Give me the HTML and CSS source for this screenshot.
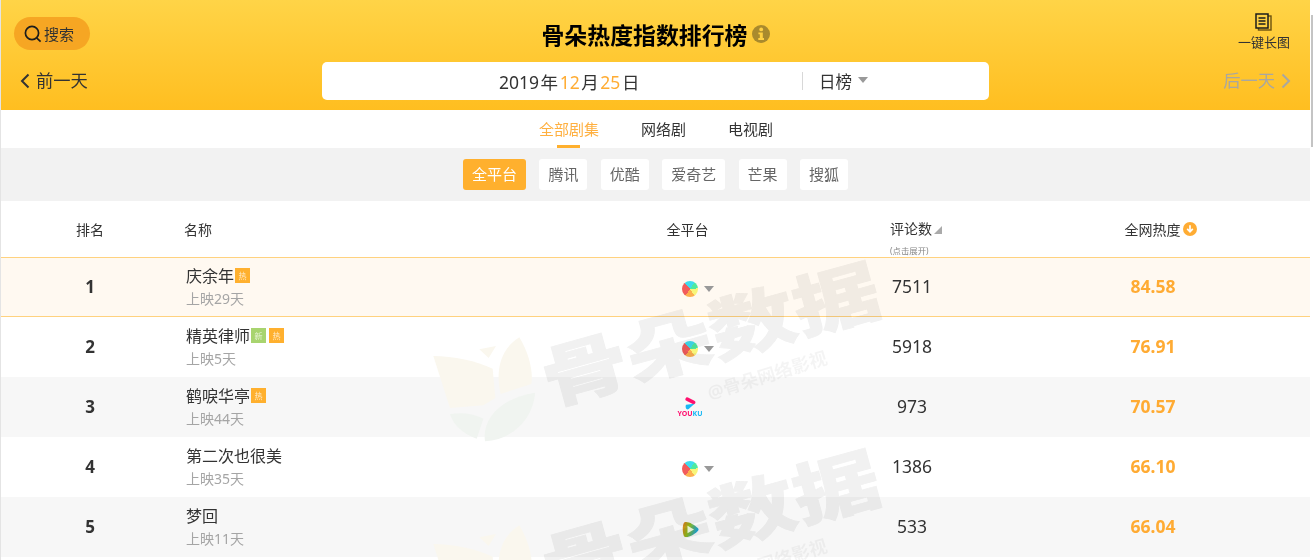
FILE: index.html
```html
<!DOCTYPE html>
<html lang="zh-CN">
<head>
<meta charset="utf-8">
<title>骨朵热度指数排行榜</title>
<link rel="stylesheet" href="styles.css">
</head>
<body>
<div class="app">
  <header class="hero">
    <div class="hero-left">
      <button class="search">
        <svg class="search-ico" viewBox="0 0 18 18"><circle cx="8" cy="8" r="6.600" fill="none" stroke="#1c1c1c" stroke-width="1.700"/><path d="M12.600 12.800l4 3.800" stroke="#1c1c1c" stroke-width="1.700" fill="none"/></svg>
        <span>搜索</span>
      </button>
      <a class="day-link prev"><svg class="chev" viewBox="0 0 10 16"><path d="M8.500 1.500L2 8l6.500 6.500" fill="none" stroke="#333" stroke-width="2"/></svg>前一天</a>
    </div>
    <div class="hero-center">
      <h1 class="title">骨朵热度指数排行榜<svg class="info" viewBox="0 0 18 18"><circle cx="9" cy="9" r="9" fill="#a98a2d"/><circle cx="9.200" cy="4.400" r="1.900" fill="#ffd042"/><path d="M6.400 7.400h4.400v5.600h1.200v1.900H6.300V13h1.500V9.200H6.400z" fill="#ffd042"/></svg></h1>
      <div class="date-box">
        <div class="date"><span>2019</span> 年 <em>12</em> 月 <em>25</em> 日</div>
        <div class="range"><span>日榜</span><i class="tri tri-range"></i></div>
      </div>
    </div>
    <div class="hero-right">
      <div class="longpic">
        <svg class="doc" viewBox="0 0 17 18"><rect x="3.500" y="3" width="12.500" height="14" fill="none" stroke="#6b5210" stroke-width="1.400"/><rect x="1" y="1" width="12" height="14" fill="#ffd042" stroke="#1c1c1c" stroke-width="1.500"/><path d="M3.500 5h7M3.500 8h7M3.500 11h7" stroke="#1c1c1c" stroke-width="1.300"/></svg>
        <span>一键长图</span>
      </div>
      <a class="day-link next">后一天<svg class="chev" viewBox="0 0 10 16"><path d="M1.500 1.500L8 8l-6.500 6.500" fill="none" stroke="#a9a7a0" stroke-width="2"/></svg></a>
    </div>
  </header>

  <nav class="tabs">
    <a class="tab active">全部剧集</a>
    <a class="tab">网络剧</a>
    <a class="tab">电视剧</a>
  </nav>

  <div class="filters">
    <a class="chip on">全平台</a>
    <a class="chip">腾讯</a>
    <a class="chip">优酷</a>
    <a class="chip">爱奇艺</a>
    <a class="chip">芒果</a>
    <a class="chip">搜狐</a>
  </div>

  <div class="table">
    <div class="row head">
      <div class="c-rank">排名</div>
      <div class="c-name head-name">名称</div>
      <div class="c-plat head-plat">全平台</div>
      <div class="c-comm head-comm"><span class="sortable">评论数<i class="corner"></i></span><small class="hint">(点击展开)</small></div>
      <div class="c-heat head-heat">全网热度<svg class="down" viewBox="0 0 14 14"><circle cx="7" cy="7" r="7" fill="#ffac33"/><path d="M7 3.200v6.200M4.200 6.800L7 9.800l2.800-3" fill="none" stroke="#fff" stroke-width="1.700"/></svg></div>
    </div>

    <div class="row first">
      <div class="c-rank rank">1</div>
      <div class="c-name"><div class="name">庆余年<b class="badge hot">热</b></div><div class="days">上映29天</div></div>
      <div class="c-plat"><i class="pie"></i><i class="tri"></i></div>
      <div class="c-comm num">7511</div>
      <div class="c-heat heat">84.58</div>
    </div>
    <div class="row">
      <div class="c-rank rank">2</div>
      <div class="c-name"><div class="name">精英律师<b class="badge new">新</b><b class="badge hot">热</b></div><div class="days">上映5天</div></div>
      <div class="c-plat"><i class="pie"></i><i class="tri"></i></div>
      <div class="c-comm num">5918</div>
      <div class="c-heat heat">76.91</div>
    </div>
    <div class="row alt">
      <div class="c-rank rank">3</div>
      <div class="c-name"><div class="name">鹤唳华亭<b class="badge hot">热</b></div><div class="days">上映44天</div></div>
      <div class="c-plat">
        <div class="youku">
          <svg class="youku-mark" viewBox="0 0 11 13"><path d="M2.200 2.200L8.600 5.400" fill="none" stroke="#ff0f6e" stroke-width="3.600" stroke-linecap="round"/><path d="M1 7.800L9.500 6.800 3.400 12.300C1 13 0 10 1 7.800z" fill="#18b8f5"/></svg>
          <span class="youku-text">YOU<span class="ku">KU</span></span>
        </div>
      </div>
      <div class="c-comm num">973</div>
      <div class="c-heat heat">70.57</div>
    </div>
    <div class="row">
      <div class="c-rank rank">4</div>
      <div class="c-name"><div class="name">第二次也很美</div><div class="days">上映35天</div></div>
      <div class="c-plat"><i class="pie"></i><i class="tri"></i></div>
      <div class="c-comm num">1386</div>
      <div class="c-heat heat">66.10</div>
    </div>
    <div class="row alt">
      <div class="c-rank rank">5</div>
      <div class="c-name"><div class="name">梦回</div><div class="days">上映11天</div></div>
      <div class="c-plat">
        <svg class="tencent" viewBox="0 0 17 17">
          <defs><linearGradient id="tg" x1="0" y1="0" x2="1" y2="0.300"><stop offset="0" stop-color="#e8791a"/><stop offset=".45" stop-color="#8fb81a"/><stop offset="1" stop-color="#1aa5d8"/></linearGradient></defs>
          <path d="M2.500 1.200C6 0 12 3.500 15.800 7c1 1 1 2 0 3-3.500 3.500-9.500 7-13.300 5.800C.5 14-.2 3.500 2.500 1.200z" fill="url(#tg)"/>
          <path d="M5.500 4.800l6.500 3.700-6.500 3.700z" fill="#f2fbdc"/>
        </svg>
      </div>
      <div class="c-comm num">533</div>
      <div class="c-heat heat">66.04</div>
    </div>
  </div>

  <div class="wm wm-a" aria-hidden="true">
    <svg class="wm-logo" viewBox="30 250 330 330">
      <path class="leaf-cream" d="M40 316c60 0 130 15 178 38l8 88-36 22-100 8z"/>
      <path class="leaf-cream" d="M298 260c30 50 42 105 36 140l-92 30c-14-60-8-130 56-170z"/>
      <path class="leaf-cream" d="M178 296l50-10-22 36z"/>
      <path class="leaf-green" d="M345 426c-4 70-60 140-150 146-10-70 50-130 150-146z"/>
      <path class="leaf-green" d="M90 490c40-6 75 0 100 14l-20 60c-40-14-70-40-80-74z"/>
    </svg>
    <div class="wm-text">骨朵数据</div>
    <div class="wm-sub">@骨朵网络影视</div>
  </div>
  <div class="wm wm-b" aria-hidden="true">
    <svg class="wm-logo" viewBox="30 250 330 330">
      <path class="leaf-cream" d="M40 316c60 0 130 15 178 38l8 88-36 22-100 8z"/>
      <path class="leaf-cream" d="M298 260c30 50 42 105 36 140l-92 30c-14-60-8-130 56-170z"/>
      <path class="leaf-cream" d="M178 296l50-10-22 36z"/>
    </svg>
    <div class="wm-text">骨朵数据</div>
    <div class="wm-sub">@骨朵网络影视</div>
  </div>

  <div class="scroll-thumb"></div>
</div>
</body>
</html>
```
FILE: styles.css
```css
* { box-sizing: border-box; }
html, body { margin: 0; padding: 0; height: 100%; overflow: hidden; background: #fff; }
body { font-family: "Noto Sans", "Noto Sans CJK SC", sans-serif; color: #333; }
.app { position: relative; width: 1310px; height: 560px; border-left: 1px solid #e4e4e4; overflow: hidden; }

.hero { height: 110px; display: grid; grid-template-columns: 321px 667px 321px; background: linear-gradient(180deg, #ffd447 0%, #ffbe20 100%); }
.hero-left, .hero-right { display: flex; flex-direction: column; }
.hero-left { align-items: flex-start; padding: 17px 0 0 13px; }
.search { width: 76px; height: 33px; border: 0; border-radius: 17px; background: #f6a623; display: flex; align-items: center; padding: 0 0 0 10px; gap: 2px; font: 15px "Noto Sans", "Noto Sans CJK SC", sans-serif; color: #333; }
.search-ico { width: 18px; height: 18px; flex: none; }
.day-link { display: flex; align-items: center; font-size: 17.300px; line-height: 24px; gap: 6px; }
.prev { margin: 19px 0 0 6px; }
.chev { width: 10px; height: 16px; flex: none; }
.next { color: #a9a7a0; margin: 7px -1px 0 0; }
.hero-right { align-items: flex-end; padding: 13px 20px 0 0; }
.longpic { display: flex; flex-direction: column; align-items: center; font-size: 13px; line-height: 17px; color: #333; height: 49px; }
.doc { width: 17px; height: 18px; flex: none; margin-bottom: 3px; }
.title { margin: 0; height: 62px; display: flex; justify-content: center; align-items: center; padding: 6px 0 0 0; font-size: 22.900px; font-weight: 700; color: #000; }
.info { width: 18px; height: 18px; margin-left: 4px; }
.date-box { height: 38px; background: #fff; border-radius: 5px; display: flex; align-items: center; }
.date { width: 480px; padding-left: 177px; font-size: 17.500px; color: #333; word-spacing: -3px; white-space: nowrap; }
.date em { font-style: normal; color: #ffac33; }
.range { display: flex; align-items: center; height: 18px; border-left: 1px solid #d8d8d8; padding-left: 16px; font-size: 16.500px; gap: 6px; }
.tri { display: block; width: 0; height: 0; border-style: solid; border-width: 6px 5.500px 0; border-color: #999 transparent transparent; }
.tri-range { border-width: 6px 5px 0; margin-top: -3px; }

.tabs { height: 38px; display: flex; justify-content: center; gap: 42px; padding: 0 0 0 1px; }
.tab { position: relative; font-size: 15px; line-height: 38px; color: #333; }
.tab.active { color: #ffb040; }
.tab.active::after { content: ""; position: absolute; left: 18px; bottom: 0; width: 23px; height: 3px; background: #ffb02e; }

.filters { height: 53px; background: #f2f2f2; display: flex; justify-content: center; align-items: flex-start; padding: 11px 0 0; gap: 13.400px; }
.chip { height: 31px; line-height: 31px; padding: 0 9px; border-radius: 3px; background: #fff; font-size: 15px; color: #666; }
.chip.on { background: #ffb02e; color: #fff; }

.row { height: 60px; display: grid; grid-template-columns: 178px 413px 196px 248px 234px; align-items: center; }
.row.head { height: 56px; font-size: 14px; }
.row.alt { background: #f7f7f7; }
.row.first { background: #fff9f1; border-top: 1px solid #ffd27f; border-bottom: 1px solid #ffd27f; }
.c-rank { text-align: center; }
.c-name { padding-left: 7px; }
.head-name { padding-left: 5px; }
.c-plat { display: grid; grid-template-columns: 1fr 28px 1fr; align-items: center; justify-items: center; }
.c-plat > .pie, .c-plat > .youku, .c-plat > .tencent { grid-column: 2; }
.c-plat > .pie, .c-plat > .tencent, .c-plat > .tri { margin-top: 4px; }
.c-plat > .tri { grid-column: 3; justify-self: start; }
.head-plat { display: block; text-align: center; padding-right: 5px; }
.c-comm { text-align: center; }
.head-comm { align-self: start; text-align: left; padding: 20px 0 0 102px; height: 56px; }
.sortable { display: flex; align-items: flex-end; line-height: 16px; }
.corner { display: block; width: 0; height: 0; margin: 0 0 3px 2px; border-style: solid; border-width: 0 0 8px 8px; border-color: transparent transparent #aaa; }
.hint { display: block; font-size: 8.400px; line-height: 10px; color: #888; margin-top: 9px; }
.c-heat { text-align: center; }
.head-heat { display: flex; justify-content: center; align-items: center; gap: 2px; padding-left: 15px; }
.down { width: 14px; height: 14px; }

.rank { font-size: 17px; font-weight: 700; color: #333; padding-bottom: 2px; }
.name { display: flex; align-items: flex-start; font-size: 16px; line-height: 22px; color: #333; height: 22px; }
.days { font-size: 14px; line-height: 20px; color: #a5a5a5; margin-top: 2px; }
.badge { width: 15px; height: 15px; margin: 3px 0 0 1px; font-size: 8px; line-height: 15px; font-weight: 400; text-align: center; color: #ffe9c4; }
.badge + .badge { margin-left: 3px; }
.badge.hot { background: #ffb02e; }
.badge.new { background: #a8d46f; color: #e6f3d4; }
.num { font-size: 17.500px; color: #333; padding-bottom: 2px; }
.heat { font-size: 17.500px; font-weight: 700; color: #ffab33; padding-bottom: 2px; }

.pie { display: block; width: 16px; height: 16px; border-radius: 50%; background: conic-gradient(#3fdcec 0deg, #3fdcec 35deg, #4eeaa0 35deg, #4eeaa0 85deg, #f7f57a 85deg, #f7f57a 145deg, #fcb050 145deg, #fcb050 215deg, #f25c5c 215deg, #f25c5c 320deg, #3fdcec 320deg); }
.youku { display: flex; flex-direction: column; align-items: center; height: 20px; }
.youku-mark { width: 11px; height: 13px; flex: none; margin-bottom: 1px; }
.youku-text { font-size: 7px; line-height: 6px; font-weight: 700; color: #ff0f6e; white-space: nowrap; }
.ku { color: #18b8f5; }
.tencent { width: 17px; height: 17px; }

.wm { position: absolute; left: 429px; width: 460px; height: 190px; pointer-events: none; }
.wm-a { top: 251px; }
.wm-b { top: 439px; }
.wm-logo { position: absolute; left: 0; top: 83px; width: 110px; height: 110px; }
.leaf-cream { fill: #faf7ee; }
.leaf-green { fill: #f0f4f0; }
.wm-text { position: absolute; left: 106px; top: 32px; font-size: 87px; line-height: 100px; font-weight: 900; color: #f1f1f1; -webkit-text-stroke: 1px #f1f1f1; mix-blend-mode: multiply; white-space: nowrap; transform: rotate(-15.500deg) scaleY(.78); }
.wm-sub { position: absolute; left: 275px; top: 112px; font-size: 18px; line-height: 24px; font-weight: 700; color: rgba(0, 0, 0, .045); white-space: nowrap; transform: rotate(-17deg); }

.scroll-thumb { position: fixed; right: 0; top: 15px; width: 2px; height: 132px; background: #c4c4c4; }
```
